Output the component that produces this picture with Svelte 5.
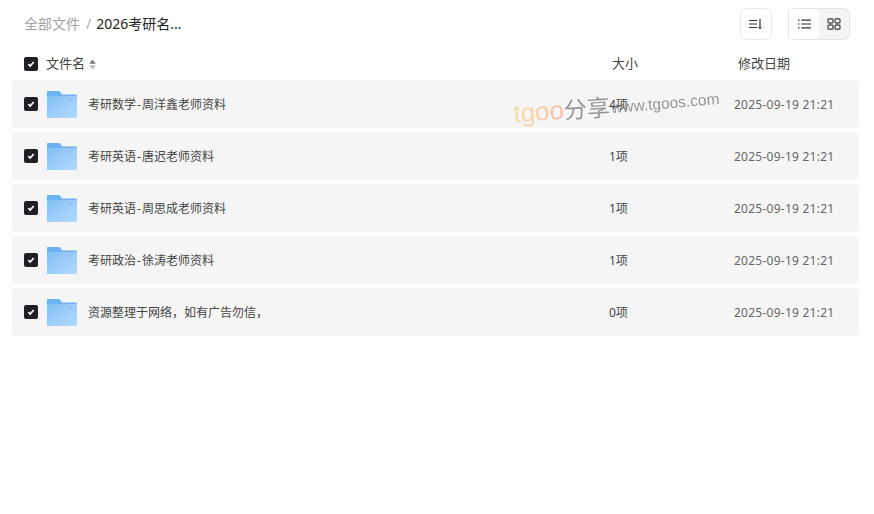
<script>
  const files = [
    { name: ['考研数学', '周洋鑫老师资料'], size: '4项', date: '2025-09-19 21:21' },
    { name: ['考研英语', '唐迟老师资料'], size: '1项', date: '2025-09-19 21:21' },
    { name: ['考研英语', '周思成老师资料'], size: '1项', date: '2025-09-19 21:21' },
    { name: ['考研政治', '徐涛老师资料'], size: '1项', date: '2025-09-19 21:21' },
    { name: ['资源整理于网络，如有广告勿信，'], size: '0项', date: '2025-09-19 21:21' }
  ];
</script>

{#snippet check()}
  <span class="check">
    <svg width="10" height="10" viewBox="0 0 10 10"><path d="M2.3 5.2 4.2 7 7.7 3" fill="none" stroke="#fff" stroke-width="1.7" /></svg>
  </span>
{/snippet}

<div class="page">
  <div class="toolbar">
    <div class="crumbs">
      <span class="root">全部文件</span>
      <span class="sep">/</span>
      <span class="current">2026考研名...</span>
    </div>
    <div class="actions">
      <button class="btn sort" aria-label="排序">
        <svg width="14" height="12" viewBox="0 0 14 12" fill="none" stroke="#333" stroke-width="1.2">
          <path d="M0 2.5h8M0 6h8M0 9.5h8" />
          <path d="M11 1v9.5" />
          <path d="M9.5 9 11 10.8 12.5 9" stroke-width="1" />
        </svg>
      </button>
      <div class="switch">
        <span class="seg active">
          <svg width="13" height="10" viewBox="0 0 13 10" fill="none" stroke="#333" stroke-width="1.2">
            <path d="M0 1.2h1.6M0 5h1.6M0 8.8h1.6M3.5 1.2H13M3.5 5H13M3.5 8.8H13" />
          </svg>
        </span>
        <span class="seg">
          <svg width="14" height="12" viewBox="0 0 14 12" fill="none" stroke="#555" stroke-width="1.4">
            <rect x="1" y="0.8" width="5" height="4.2" rx="1.2" />
            <rect x="8" y="0.8" width="5" height="4.2" rx="1.2" />
            <rect x="1" y="7" width="5" height="4.2" rx="1.2" />
            <rect x="8" y="7" width="5" height="4.2" rx="1.2" />
          </svg>
        </span>
      </div>
    </div>
  </div>

  <div class="head">
    <div class="head-name">
      {@render check()}
      <span class="head-label">文件名</span>
      <svg class="sorter" width="7" height="11" viewBox="0 0 7 11"><path d="M3.5 0.5 6.8 4.8H0.2Z" fill="#777" /><path d="M3.5 10.5 0.2 6.2H6.8Z" fill="#bbb" /></svg>
    </div>
    <div class="head-size">大小</div>
    <div class="head-date">修改日期</div>
  </div>

  <div class="list">
    {#each files as file}
      <div class="row">
        {@render check()}
        <svg class="folder" width="30" height="27" viewBox="0 0 30 27">
          <defs>
            <linearGradient id="fold" x1="0" y1="0" x2="1" y2="1">
              <stop offset="0" stop-color="#82bff6" />
              <stop offset="1" stop-color="#b5dafd" />
            </linearGradient>
          </defs>
          <path d="M1 0h10.5c.8 0 1.4.3 1.9 1l1.6 2.5h13.5c1 0 1.5.5 1.5 1.5V26c0 .6-.4 1-1 1H1c-.6 0-1-.4-1-1V1c0-.6.4-1 1-1Z" fill="#6db3f2" />
          <path d="M1.2 5H29c.6 0 1 .4 1 1v20c0 .6-.4 1-1 1H1.2c-.6 0-1.2-.4-1.2-1V6c0-.6.6-1 1.2-1Z" fill="url(#fold)" />
          <rect x="22" y="8" width="3" height="2" fill="#8cc3f3" />
        </svg>
        <span class="name">{file.name[0]}{#if file.name[1]}<span class="dash">-</span>{file.name[1]}{/if}</span>
        <span class="size">{file.size}</span>
        <span class="date">{file.date}</span>
      </div>
    {/each}
  </div>

  <div class="watermark">
    <span class="tgoo">tgoo</span><span class="share">分享</span><span class="url">www.tgoos.com</span>
  </div>
</div>

<style>
  :global(body) {
    margin: 0;
    background: #fff;
  }

  .page {
    position: relative;
    width: 874px;
    height: 514px;
    overflow: hidden;
    font-family: "Noto Sans", "Noto Sans CJK SC", sans-serif;
    color: #333;
  }

  .toolbar {
    display: flex;
    justify-content: space-between;
    align-items: center;
    height: 32px;
    padding: 8px 24px 0;
  }

  .crumbs {
    display: flex;
    align-items: center;
    gap: 6px;
    margin-top: -2px;
    font-size: 14px;
  }

  .root {
    color: #a3a3a3;
  }

  .sep {
    color: #a9b4bd;
  }

  .current {
    margin-left: -1px;
    color: #222;
  }

  .actions {
    display: flex;
    gap: 16px;
  }

  .btn {
    display: flex;
    align-items: center;
    justify-content: center;
    width: 32px;
    height: 32px;
    padding: 0;
    box-sizing: border-box;
    background: #fff;
    border: 1px solid #e8e8e8;
    border-radius: 6px;
  }

  .switch {
    display: flex;
    width: 62px;
    height: 32px;
    box-sizing: border-box;
    border: 1px solid #e4e4e4;
    border-radius: 6px;
    overflow: hidden;
    background: #f4f4f4;
  }

  .seg {
    flex: 1;
    display: flex;
    align-items: center;
    justify-content: center;
  }

  .seg.active {
    background: #fff;
    border-radius: 0 6px 6px 0;
  }

  .head {
    display: flex;
    align-items: center;
    height: 24px;
    margin-top: 12px;
    padding: 0 24px;
    font-size: 13px;
    line-height: 20px;
    color: #444;
  }

  .head-name {
    display: flex;
    align-items: center;
    width: 588px;
  }

  .head-label {
    margin: -2px 0 0 8px;
  }

  .sorter {
    margin-left: 4px;
  }

  .head-size {
    width: 126px;
    margin-top: -2px;
  }

  .head-date {
    margin-top: -2px;
  }

  .check {
    display: flex;
    align-items: center;
    justify-content: center;
    flex: none;
    width: 14px;
    height: 14px;
    background: #1f1f24;
    border-radius: 2px;
  }

  .list {
    display: flex;
    flex-direction: column;
    gap: 4px;
    margin: 4px 15px 0 12px;
  }

  .row {
    display: flex;
    align-items: center;
    height: 48px;
    padding-left: 12px;
    background: #f5f5f5;
    border-radius: 4px;
    font-size: 12px;
    color: #444;
  }

  .folder {
    flex: none;
    margin-left: 9px;
    margin-top: 1px;
  }

  .name {
    width: 521px;
    margin-left: 11px;
  }

  .dash {
    margin: 0 1px;
  }

  .size {
    width: 125px;
  }

  .date {
    color: #666;
    letter-spacing: 0.25px;
  }

  .watermark {
    position: absolute;
    left: 513px;
    top: 88px;
    display: flex;
    align-items: baseline;
    transform: rotate(-4deg);
    white-space: nowrap;
    pointer-events: none;
    opacity: 0.6;
    font-family: "Liberation Sans", "Noto Sans CJK SC", sans-serif;
  }

  .tgoo {
    font-size: 26px;
    background: linear-gradient(90deg, #fbd268, #ff8f7a);
    -webkit-background-clip: text;
    background-clip: text;
    color: transparent;
  }

  .share {
    font-size: 23px;
    color: #555;
  }

  .url {
    font-size: 15.5px;
    color: #555;
    margin-left: 1px;
    transform: translateY(-3px) rotate(-1deg);
  }
</style>
